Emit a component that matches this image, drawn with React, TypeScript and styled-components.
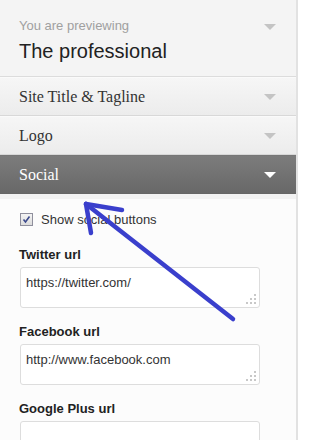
import * as React from 'react'
import styled, { createGlobalStyle } from 'styled-components'

const GlobalStyle = createGlobalStyle`
  html, body {
    margin: 0;
    padding: 0;
    background: #ffffff;
  }
  body {
    font-family: 'Liberation Sans', Arial, sans-serif;
  }
`

const Page = styled.div`
  position: relative;
  width: 310px;
  height: 440px;
  overflow: hidden;
  background: #ffffff;
`

const Panel = styled.div`
  width: 296px;
  height: 440px;
  overflow: hidden;
  border-right: 2px solid #e2e2e2;
  background: #fcfcfc;
  display: flex;
  flex-direction: column;
`

const Preview = styled.div`
  flex-shrink: 0;
  height: 77px;
  box-sizing: border-box;
  padding: 18px 20px 0 19px;
  background: #f4f4f4;
  border-bottom: 1px solid #dcdcdc;
  display: flex;
  justify-content: space-between;
`

const PreviewLabel = styled.div`
  font-size: 13px;
  color: #a0a0a0;
  line-height: 16px;
`

const PreviewTitle = styled.div`
  font-size: 20px;
  color: #222222;
  line-height: 24px;
  margin-top: 5px;
`

const Caret = styled.span<{ $light?: boolean; $top?: number }>`
  display: block;
  width: 0;
  height: 0;
  margin-top: ${({ $top }) => $top ?? 0}px;
  border-left: 6px solid transparent;
  border-right: 6px solid transparent;
  border-top: 6px solid ${({ $light }) => ($light ? '#ffffff' : '#c4c4c4')};
`

const Section = styled.div<{ $open?: boolean }>`
  flex-shrink: 0;
  height: 39px;
  box-sizing: border-box;
  padding: 0 20px 0 19px;
  display: flex;
  align-items: center;
  justify-content: space-between;
  font-family: 'Liberation Serif', 'Times New Roman', serif;
  font-size: 16px;
  color: ${({ $open }) => ($open ? '#ffffff' : '#333333')};
  background: ${({ $open }) =>
    $open
      ? 'linear-gradient(#7c7c7c, #686868)'
      : 'linear-gradient(#f6f6f6, #ececec)'};
  border-bottom: 1px solid ${({ $open }) => ($open ? '#666666' : '#d8d8d8')};
  border-top: 1px solid ${({ $open }) => ($open ? '#777777' : '#fafafa')};
`

const Content = styled.div`
  flex: 1;
  border-top: 5px solid #f2f2f2;
  padding: 13px 20px 0 19px;
  display: flex;
  flex-direction: column;
`

const CheckRow = styled.label`
  display: flex;
  align-items: center;
  gap: 8px;
  height: 15px;
  font-size: 13px;
  color: #333333;
  margin-left: 1px;
  margin-bottom: 4px;
`

const CheckBox = styled.span`
  width: 13px;
  height: 13px;
  box-sizing: border-box;
  border: 1px solid #8f8f9d;
  background: linear-gradient(#f4f4f4, #dcdcdc);
  display: flex;
  align-items: center;
  justify-content: center;
`

const FieldLabel = styled.div`
  font-size: 13px;
  font-weight: bold;
  color: #222222;
  margin-top: 16px;
  line-height: 16px;
`

const Field = styled.div`
  flex-shrink: 0;
  position: relative;
  width: 240px;
  height: 41px;
  box-sizing: border-box;
  margin-top: 4px;
  margin-left: 1px;
  border: 1px solid #dddddd;
  border-radius: 3px;
  background: #ffffff;
  padding: 7px 5px;
  font-size: 13px;
  color: #333333;
  line-height: 15px;
`

const Grip = styled.svg`
  position: absolute;
  right: 3px;
  bottom: 3px;
`

const Arrow = styled.svg`
  position: absolute;
  left: 0;
  top: 0;
  pointer-events: none;
`

function ResizeGrip() {
  const dots = [
    [8, 0],
    [4, 4],
    [8, 4],
    [0, 8],
    [4, 8],
    [8, 8]
  ]
  return (
    <Grip width="10" height="10" viewBox="0 0 10 10">
      {dots.map(([x, y]) => (
        <rect key={`${x}-${y}`} x={x} y={y} width="2" height="2" fill="#c8c8c8" />
      ))}
    </Grip>
  )
}

export default function App() {
  return (
    <Page>
      <GlobalStyle />
      <Panel>
        <Preview>
          <div>
            <PreviewLabel>You are previewing</PreviewLabel>
            <PreviewTitle>The professional</PreviewTitle>
          </div>
          <Caret $top={6} />
        </Preview>
        <Section>
          Site Title &amp; Tagline
          <Caret />
        </Section>
        <Section>
          Logo
          <Caret />
        </Section>
        <Section $open>
          Social
          <Caret $light />
        </Section>
        <Content>
          <CheckRow>
            <CheckBox>
              <svg width="9" height="9" viewBox="0 0 9 9">
                <path d="M1.5 4.5 L3.5 7 L7.5 1.5" fill="none" stroke="#3c4a8c" strokeWidth="1.6" />
              </svg>
            </CheckBox>
            Show social buttons
          </CheckRow>
          <FieldLabel>Twitter url</FieldLabel>
          <Field>
            https://twitter.com/
            <ResizeGrip />
          </Field>
          <FieldLabel>Facebook url</FieldLabel>
          <Field>
            http://www.facebook.com
            <ResizeGrip />
          </Field>
          <FieldLabel>Google Plus url</FieldLabel>
          <Field />
        </Content>
      </Panel>
      <Arrow width="310" height="440" viewBox="0 0 310 440">
        <g stroke="#3a3fcc" strokeWidth="4.5" strokeLinecap="round" fill="none">
          <path d="M233 319 L86 204" />
          <path d="M86 204 L122 210" />
          <path d="M86 204 L91 233" />
        </g>
      </Arrow>
    </Page>
  )
}
